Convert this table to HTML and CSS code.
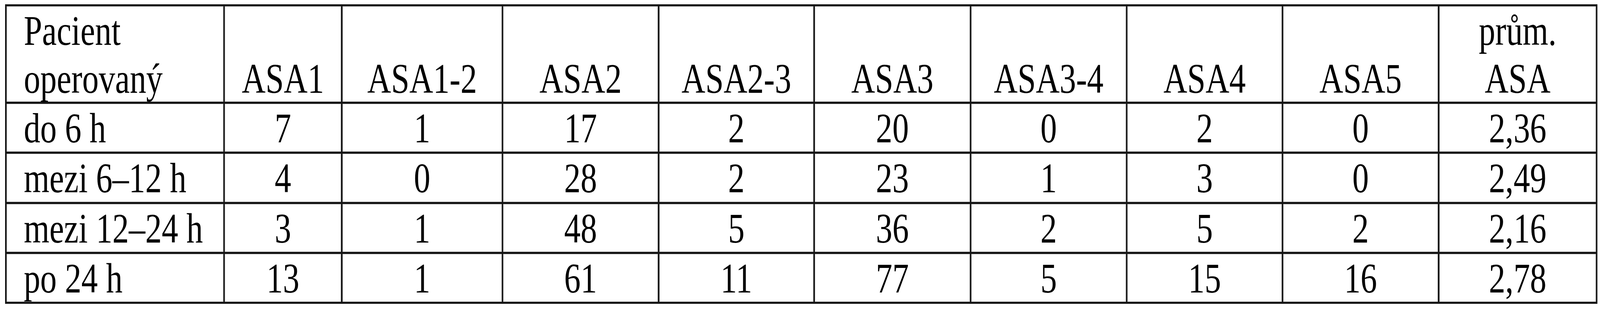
FILE: index.html
```html
<!DOCTYPE html>
<html lang="cs">
<head>
<meta charset="utf-8">
<title>ASA tabulka</title>
<link rel="stylesheet" href="styles.css">
</head>
<body>
<div class="table">
  <div class="cell head first">Pacient<br>operovaný</div>
  <div class="cell head single">ASA1</div>
  <div class="cell head single">ASA1-2</div>
  <div class="cell head single">ASA2</div>
  <div class="cell head single">ASA2-3</div>
  <div class="cell head single">ASA3</div>
  <div class="cell head single">ASA3-4</div>
  <div class="cell head single">ASA4</div>
  <div class="cell head single">ASA5</div>
  <div class="cell head">prům.<br>ASA</div>

  <div class="cell first">do 6 h</div>
  <div class="cell">7</div>
  <div class="cell">1</div>
  <div class="cell">17</div>
  <div class="cell">2</div>
  <div class="cell">20</div>
  <div class="cell">0</div>
  <div class="cell">2</div>
  <div class="cell">0</div>
  <div class="cell">2,36</div>

  <div class="cell first">mezi 6–12 h</div>
  <div class="cell">4</div>
  <div class="cell">0</div>
  <div class="cell">28</div>
  <div class="cell">2</div>
  <div class="cell">23</div>
  <div class="cell">1</div>
  <div class="cell">3</div>
  <div class="cell">0</div>
  <div class="cell">2,49</div>

  <div class="cell first">mezi 12–24 h</div>
  <div class="cell">3</div>
  <div class="cell">1</div>
  <div class="cell">48</div>
  <div class="cell">5</div>
  <div class="cell">36</div>
  <div class="cell">2</div>
  <div class="cell">5</div>
  <div class="cell">2</div>
  <div class="cell">2,16</div>

  <div class="cell first">po 24 h</div>
  <div class="cell">13</div>
  <div class="cell">1</div>
  <div class="cell">61</div>
  <div class="cell">11</div>
  <div class="cell">77</div>
  <div class="cell">5</div>
  <div class="cell">15</div>
  <div class="cell">16</div>
  <div class="cell">2,78</div>
</div>
</body>
</html>
```

FILE: styles.css
```css
html, body {
  margin: 0;
  padding: 0;
  background: #ffffff;
  overflow: hidden;
}

body {
  padding: 11px 0 0 13px;
  font-family: "Liberation Serif", "Times New Roman", serif;
  font-size: 107px;
  line-height: 123px;
  color: #000000;
}

/* Table designed for a 5206px wide page; squeezed horizontally to fit narrower windows */
.table {
  display: grid;
  grid-template-columns: 705px 378px 518px 503px 501px 504px 503px 502px 503px 509px;
  grid-template-rows: 245px 123px 124px 123px 123px;
  gap: 5px;
  padding: 5px;
  width: max-content;
  background: #141414;
  transform-origin: 0 0;
}

@media (max-width: 5205px) {
  .table {
    transform: scaleX(0.78678);
    transform: scaleX(calc(100vw / 5206px));
  }
}

.cell {
  background: #ffffff;
  text-align: center;
  overflow: hidden;
  white-space: nowrap;
  padding-top: 2px;
  box-shadow: inset 0 0 0 1px #a8a8a8;
}

.cell.head.single {
  padding-top: 125px;
}

.cell.first {
  text-align: left;
  padding-left: 56px;
}
```
